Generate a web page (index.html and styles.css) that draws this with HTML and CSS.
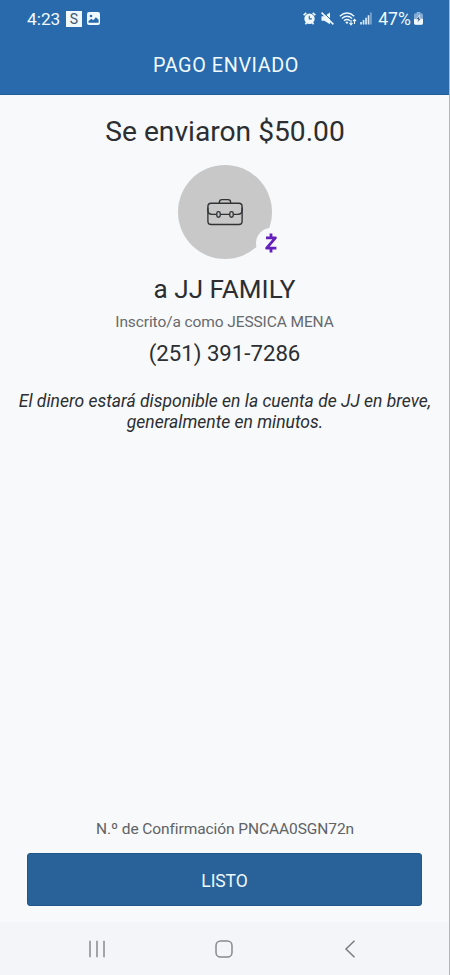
FILE: index.html
```html
<!DOCTYPE html>
<html lang="es">
<head>
  <meta charset="UTF-8" />
  <meta name="viewport" content="width=device-width, initial-scale=1" />
  <title>Pago enviado</title>
  <link rel="stylesheet" href="styles.css">
</head>
<body>
  <div class="screen">
    <header class="top">
      <div class="status-bar">
        <span class="time">4:23</span>
        <span class="app-badge">S</span>
        <svg class="picture" viewBox="0 0 13 13" width="13" height="13">
          <rect width="13" height="13" rx="2" fill="#eef8fd"/>
          <circle cx="4" cy="4" r="1.3" fill="#286aac"/>
          <path d="M1.5 10.7V9l2.8-2.3 2 1.6 2.6-3 2.7 2.5v2.9z" fill="#286aac"/>
        </svg>
        <div class="status-right">
          <!-- alarm -->
          <svg class="alarm" viewBox="0 0 13 13" width="13" height="13">
            <path d="M.6 3.2 3.3.8M12.4 3.2 9.7.8M2.4 12.2l1.2-1.5M10.6 12.2l-1.2-1.5" stroke="#eef8fd" stroke-width="1.6"/>
            <circle cx="6.5" cy="6.7" r="5.2" fill="#eef8fd"/>
            <path d="M6.3 3.8v3.1h2.6" fill="none" stroke="#286aac" stroke-width="1.1"/>
          </svg>
          <!-- muted -->
          <svg class="mute" viewBox="0 0 13 13" width="13" height="13">
            <path d="M.5 4.2h2.8L9 .6v11.6L3.3 8.7H.5z" fill="#eef8fd"/>
            <path d="M2 0 13 11" stroke="#286aac" stroke-width="1"/>
            <path d="M.6.6 12.4 12.4" stroke="#eef8fd" stroke-width="1.5"/>
          </svg>
          <!-- wifi -->
          <svg class="wifi" viewBox="0 0 18 14" width="18" height="14">
            <g fill="none" stroke="#eef8fd" stroke-width="1.4">
              <path d="M.8 4.2Q8 -2 15.2 4.2"/>
              <path d="M2.9 6.5Q8 2.1 13.1 6.5"/>
              <path d="M5 8.7Q8 6.1 11 8.7"/>
            </g>
            <path d="M6.2 10.1Q8 8.8 9.5 10.1L8 12.3z" fill="#eef8fd"/>
            <path d="M12 8v4.5M10.4 11l1.6 1.8 1.6-1.8M15.5 12V7.5M13.9 9.2l1.6-1.8 1.6 1.8" fill="none" stroke="#eef8fd" stroke-width="1.1"/>
          </svg>
          <!-- signal -->
          <svg class="signal" viewBox="0 0 12 13" width="12" height="13">
            <path d="M.2 10h1.7v2.5H.2zM2.7 8h1.7v4.5H2.7zM5.2 5.7h1.7v6.8H5.2zM7.7 3.2h1.7v9.3H7.7z" fill="#d8eaf7"/>
            <path d="M10.1.5h1.6v12h-1.6z" fill="#7fa9d2"/>
          </svg>
          <span class="percent">47%</span>
          <!-- battery -->
          <svg class="battery" viewBox="0 0 9 13" width="9" height="13">
            <rect x="2.7" y="0" width="3.6" height="2" fill="#8fb3d8"/>
            <rect x="0" y="1.3" width="9" height="11.4" rx="1.6" fill="#84abd3"/>
            <path d="M0 7h9v4.1q0 1.6-1.6 1.6H1.6Q0 12.7 0 11.1z" fill="#eef8fd"/>
            <path d="M5.7 3 1.8 7.6h2.3l-.6 3.4 3.8-4.8H5z" fill="#34547c" stroke="#eef8fd" stroke-width=".7"/>
          </svg>
        </div>
      </div>
      <h1 class="title">PAGO ENVIADO</h1>
    </header>

    <main class="content">
      <h2 class="amount">Se enviaron $50.00</h2>
      <div class="avatar">
        <svg class="briefcase" viewBox="0 0 36 28" width="36" height="28">
          <g fill="none" stroke="#303234" stroke-width="1.35">
            <rect x=".9" y="5.2" width="34.2" height="21.3" rx="3.2"/>
            <path d="M12.4 5V4.2q0-2.6 2.6-2.6h6q2.6 0 2.6 2.6V5"/>
            <path d="M.9 9.5v2.8q0 4 4.2 4h4.5M13.6 16.3h8.8M26.4 16.3h4.5q4.2 0 4.2-4V9.5"/>
            <rect x="9.8" y="13.6" width="3.4" height="5.6" rx="1.7"/>
            <rect x="22.8" y="13.6" width="3.4" height="5.6" rx="1.7"/>
          </g>
        </svg>
        <span class="zelle">
          <svg viewBox="0 0 14 20" width="14" height="20">
            <path d="M2 4.8h9.4L2.6 15.1h9.8M7 .6v4M7 15v4.4" fill="none" stroke="#651fbb" stroke-width="2.8" stroke-linejoin="round"/>
          </svg>
        </span>
      </div>
      <div class="recipient">a JJ FAMILY</div>
      <div class="enrolled">Inscrito/a como JESSICA MENA</div>
      <div class="phone">(251) 391-7286</div>
      <p class="note">El dinero estará disponible en la cuenta de JJ en breve,<br>generalmente en minutos.</p>
    </main>

    <footer class="bottom">
      <div class="confirmation">N.º de Confirmación PNCAA0SGN72n</div>
      <button class="done">LISTO</button>
    </footer>

    <nav class="nav-bar">
      <svg viewBox="0 0 18 18" width="18" height="18">
        <path d="M2 .8v16.4M9 .8v16.4M16 .8v16.4" stroke="#88898d" stroke-width="1.5"/>
      </svg>
      <svg viewBox="0 0 18 18" width="18" height="18">
        <rect x="1" y="1" width="16" height="16" rx="4.6" fill="none" stroke="#88898d" stroke-width="1.5"/>
      </svg>
      <svg viewBox="0 0 18 18" width="18" height="18">
        <path d="M13.5.8 5 9l8.5 8.2" fill="none" stroke="#7b7c80" stroke-width="1.5"/>
      </svg>
    </nav>
  </div>
</body>
</html>
```
FILE: styles.css
```css
* { box-sizing: border-box; }
body { margin: 0; font-family: Roboto, sans-serif; color: #2c2e31; background: #f7f9fb; }
.screen { display: flex; flex-direction: column; width: 450px; height: 975px; overflow: hidden; border-right: 1px solid #b4b6ba; text-align: center; }

.top { height: 95px; background: #286aac; border-bottom: 1px solid #215d94; color: #f1faff; }
.status-bar { display: flex; align-items: center; height: 37px; padding: 0 26px 0 27px; }
.time { width: 34px; font-size: 17.3px; line-height: 20px; text-align: left; white-space: nowrap; }
.app-badge { width: 16px; height: 16px; margin: 1px 5px 0; background: #eef8fd; color: #40566f; font-size: 14px; line-height: 16px; }
.status-right { display: flex; align-items: center; margin-left: auto; }
.mute { margin-left: 5px; }
.wifi { margin-left: 5px; }
.signal { margin-left: 3px; }
.percent { width: 35px; margin: 0 2px 0 5px; font-size: 17.6px; line-height: 20px; white-space: nowrap; }
.title { margin: 17px 0 0 3px; font-size: 19.8px; font-weight: 400; line-height: 24px; letter-spacing: .6px; }

.content { flex: 1; display: flex; flex-direction: column; align-items: center; white-space: nowrap; }
.amount { margin: 19px 0 0 1px; font-size: 28.2px; font-weight: 400; line-height: 36px; }
.avatar { position: relative; display: flex; align-items: center; justify-content: center; width: 94px; height: 94px; margin-top: 15px; border-radius: 50%; background: #c8c8c8; }
.zelle { position: absolute; left: 78px; top: 63px; display: flex; align-items: center; justify-content: center; width: 30px; height: 30px; border-radius: 50%; background: #f7f9fb; }
.recipient { margin-top: 14px; font-size: 26.1px; line-height: 32px; }
.enrolled { margin-top: 7px; font-size: 15.5px; line-height: 20px; letter-spacing: -.1px; color: #67696c; }
.phone { margin-top: 8px; font-size: 22.2px; line-height: 26px; }
.note { margin: 25px 0 0 1px; font-size: 17.5px; font-style: italic; line-height: 20.5px; }

.bottom { padding: 0 27px 16px; }
.confirmation { margin: 0 0 14px 1px; font-size: 15.5px; line-height: 20px; letter-spacing: -.08px; color: #606265; }
.done { display: block; width: 100%; height: 53px; padding: 2px 0 0; border: 1px solid #215889; border-radius: 3px; background: #286298; color: #edf8ff; font-family: inherit; font-size: 17.5px; letter-spacing: -.1px; }

.nav-bar { display: flex; justify-content: space-between; align-items: center; height: 53px; padding: 0 90px 0 88px; background: #f4f5f8; }
```
